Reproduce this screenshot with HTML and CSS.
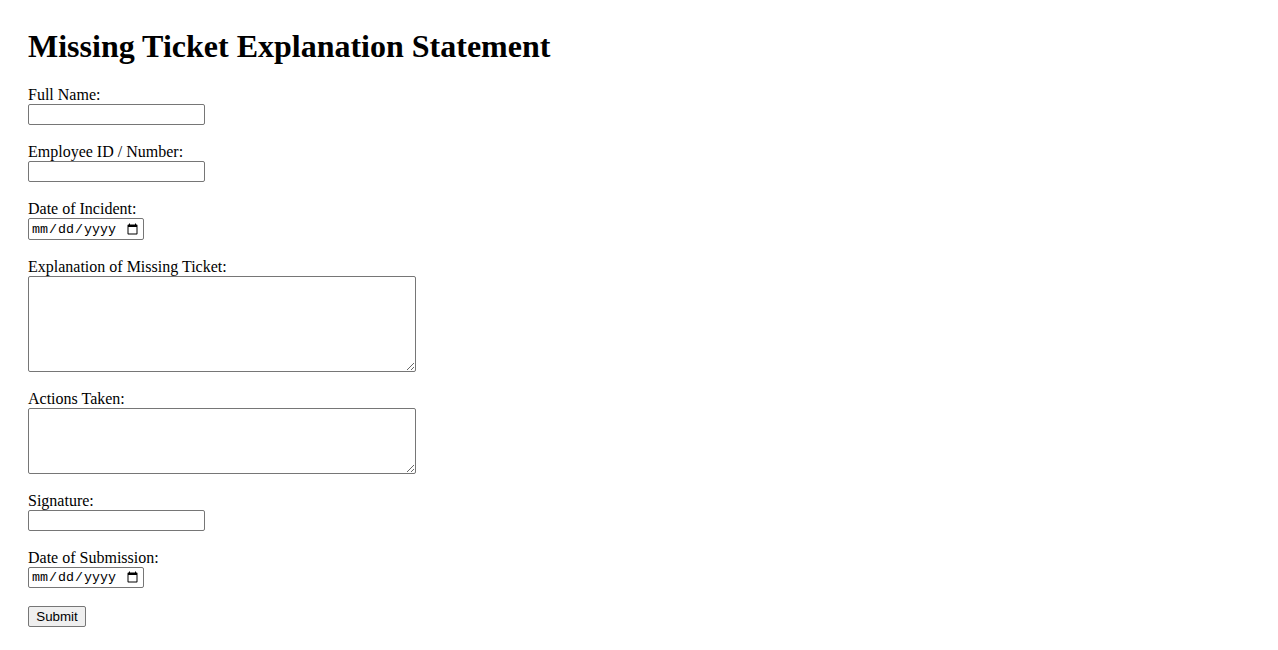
FILE: index.html
```html
<!DOCTYPE html>
<html lang="en">
<head>
<meta charset="utf-8">
<title>Missing Ticket Explanation Statement</title>
<link rel="stylesheet" href="styles.css">
</head>
<body>
<h1 class="title">Missing Ticket Explanation Statement</h1>
<form class="form">
  <div class="field">
    <label class="label" for="name">Full Name:</label>
    <input class="text-input" type="text" id="name">
  </div>
  <div class="field">
    <label class="label" for="emp">Employee ID / Number:</label>
    <input class="text-input" type="text" id="emp">
  </div>
  <div class="field">
    <label class="label" for="inc">Date of Incident:</label>
    <input class="date-input" type="date" id="inc">
  </div>
  <div class="field">
    <label class="label" for="expl">Explanation of Missing Ticket:</label>
    <textarea class="area area-tall" id="expl"></textarea>
  </div>
  <div class="field">
    <label class="label" for="act">Actions Taken:</label>
    <textarea class="area area-short" id="act"></textarea>
  </div>
  <div class="field">
    <label class="label" for="sig">Signature:</label>
    <input class="text-input" type="text" id="sig">
  </div>
  <div class="field">
    <label class="label" for="sub">Date of Submission:</label>
    <input class="date-input date-input-compact" type="date" id="sub">
  </div>
  <button class="submit" type="submit">Submit</button>
</form>
</body>
</html>
```

FILE: styles.css
```css
html, body {
  background: #ffffff;
}
body {
  margin: 8px;
  padding: 20px;
  font-family: "Liberation Serif", "Times New Roman", serif;
  font-size: 16px;
  color: #000000;
}
.title {
  margin: 0 0 21.44px 0;
  font-size: 32px;
  font-weight: bold;
  line-height: 37px;
}
.form {
  display: flex;
  flex-direction: column;
  align-items: flex-start;
}
.field {
  display: flex;
  flex-direction: column;
  align-items: flex-start;
  margin-bottom: 18px;
}
.label {
  display: block;
  line-height: 18px;
}
.text-input,
.date-input,
.area,
.submit {
  box-sizing: border-box;
  margin: 0;
  border: 1px solid #767676;
  border-radius: 2px;
  background: #ffffff;
}
.text-input {
  width: 177px;
  height: 21px;
  padding: 1px 2px;
  font-family: "Liberation Sans", Arial, sans-serif;
  font-size: 13.33px;
}
.date-input {
  width: 116px;
  height: 22px;
  padding: 1px 2px;
  font-family: "Liberation Mono", "DejaVu Sans Mono", monospace;
  font-size: 13.33px;
}
.date-input-compact {
  height: 21px;
}
.area {
  width: 388px;
  padding: 2px;
  font-family: "Liberation Mono", monospace;
  font-size: 13.33px;
}
.area-tall {
  height: 96px;
}
.area-short {
  height: 66px;
}
.submit {
  width: 58px;
  height: 21px;
  padding: 1px 6px;
  background: #efefef;
  color: #000000;
  font-family: "Liberation Sans", Arial, sans-serif;
  font-size: 13.33px;
  line-height: 16px;
}
```
